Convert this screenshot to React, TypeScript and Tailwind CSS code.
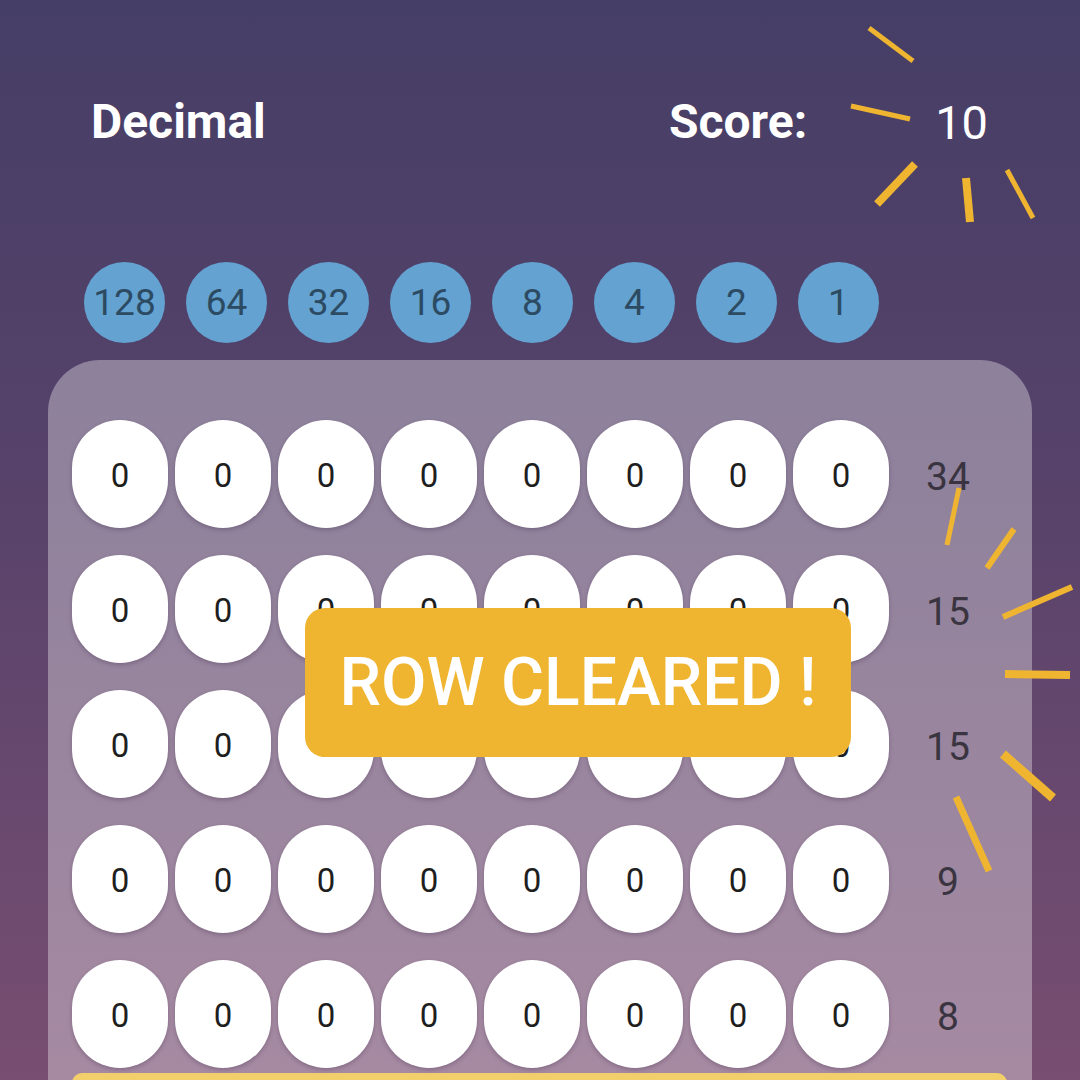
import React from "react";

const weights = [128, 64, 32, 16, 8, 4, 2, 1];
const rowTotals = [34, 15, 15, 9, 8];

const sparks: [number, number, number, number, number][] = [
  [869, 28, 913, 61, 5],
  [851, 106, 910, 119, 5],
  [915, 164, 877, 204, 8],
  [966, 178, 970, 222, 8],
  [1007, 170, 1033, 218, 5],
  [959, 488, 947, 545, 5],
  [1014, 529, 987, 568, 6],
  [1072, 587, 1003, 617, 6],
  [1005, 674, 1070, 675, 8],
  [1003, 754, 1053, 798, 9],
  [956, 797, 989, 871, 7],
];

export default function App() {
  return (
    <div className="relative w-[1080px] h-[1080px] overflow-hidden bg-[linear-gradient(180deg,#453e66_0%,#57426a_45%,#784e72_100%)] font-['Roboto',sans-serif]">
      {/* Header */}
      <div className="flex items-center pt-[98px] pl-[91px] pr-[92px] leading-none text-white">
        <div className="text-[48px] font-bold leading-none">Decimal</div>
        <div className="ml-auto text-[48px] font-bold leading-none">Score:</div>
        <div className="ml-[128px] text-[47px] font-normal leading-none">10</div>
      </div>

      {/* Bit weights */}
      <div className="mt-[116px] flex gap-[21px] pl-[84px]">
        {weights.map((w) => (
          <div
            key={w}
            className="flex h-[81px] w-[81px] items-center justify-center rounded-full bg-[#63a2d1] text-[37px] leading-none text-[#2c4b63]"
          >
            {w}
          </div>
        ))}
      </div>

      {/* Board */}
      <div className="relative mx-[48px] mt-[17px] rounded-t-[52px] bg-white/[0.34] pl-[24px] pr-[25px] pt-[60px] h-[800px]">
        <div className="flex flex-col gap-[27px]">
          {rowTotals.map((t, r) => (
            <div key={r} className="flex items-center">
              <div className="flex gap-[7px]">
                {weights.map((w) => (
                  <div
                    key={w}
                    className="flex h-[108px] w-[96px] items-center justify-center rounded-full bg-white pt-[3px] text-[33px] leading-none text-[#1e1e1e] shadow-[0_2px_4px_rgba(40,20,50,0.25)]"
                  >
                    0
                  </div>
                ))}
              </div>
              <div className="w-[118px] pt-[6px] text-center text-[39px] leading-none text-[#3a3440]">{t}</div>
            </div>
          ))}
        </div>
        <div className="mt-[5px] h-[40px] w-[935px] rounded-t-[10px] bg-[#f3cf6c]" />
      </div>

      {/* Banner */}
      <div className="absolute left-[305px] top-[608px] flex h-[149px] w-[546px] items-center justify-center rounded-[20px] bg-[#efb530] text-[66px] font-medium leading-none text-white">
        ROW CLEARED !
      </div>

      {/* Sparkles */}
      <svg className="pointer-events-none absolute left-0 top-0" width="1080" height="1080" viewBox="0 0 1080 1080">
        {sparks.map(([x1, y1, x2, y2, sw], i) => (
          <line key={i} x1={x1} y1={y1} x2={x2} y2={y2} stroke="#efb530" strokeWidth={sw} />
        ))}
      </svg>
    </div>
  );
}
